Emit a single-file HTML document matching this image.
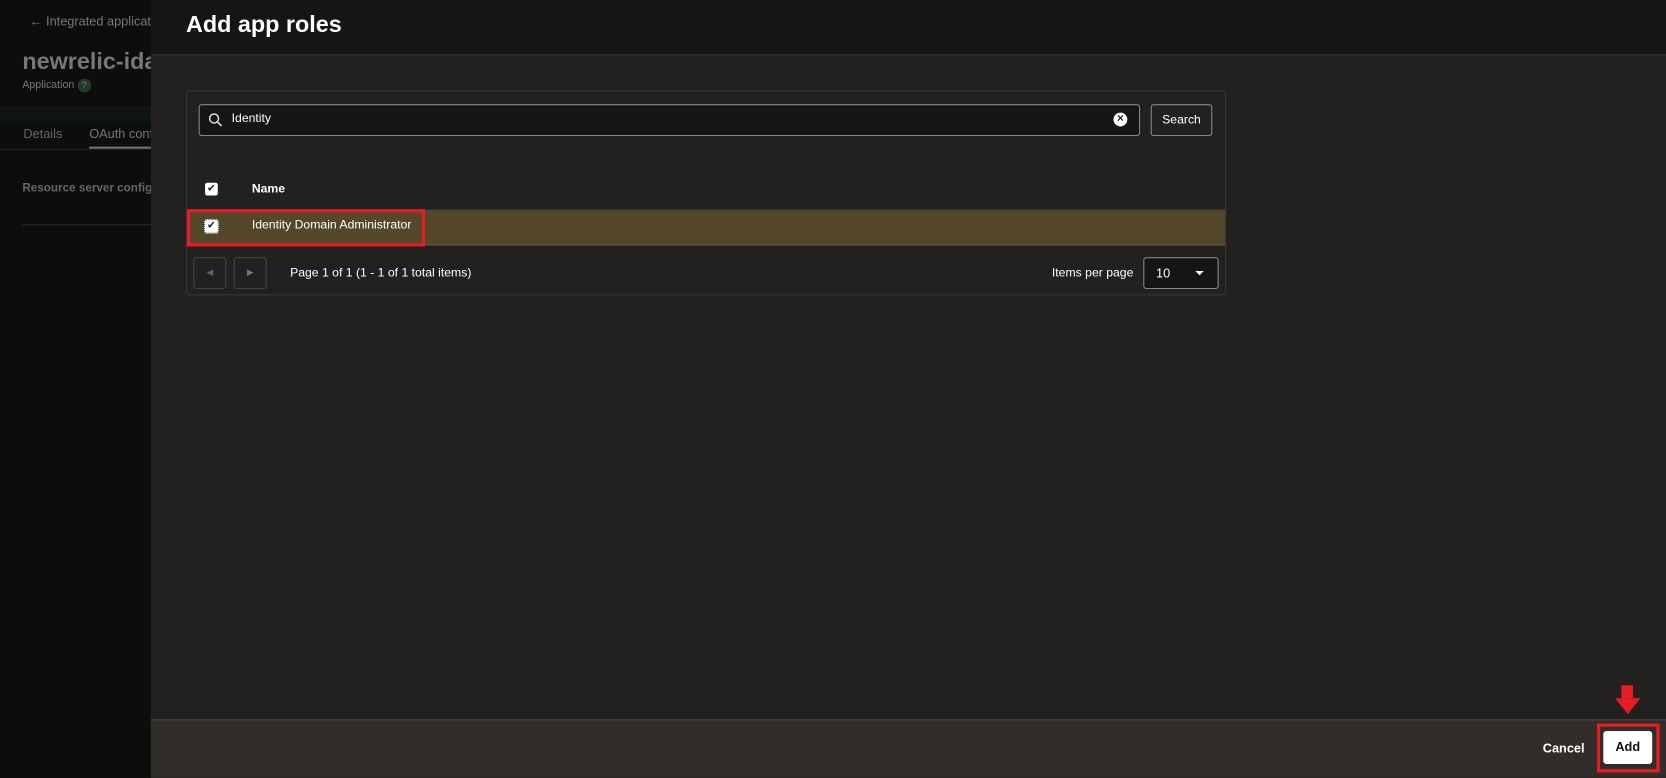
<!DOCTYPE html>
<html><head><meta charset="utf-8"><style>
*{margin:0;padding:0;box-sizing:border-box}
html,body{width:1666px;height:777px;overflow:hidden;background:#0c0c0b}
body{font-family:"Liberation Sans",sans-serif;color:#fff}
#w{position:absolute;left:0;top:0;width:1568px;height:732px;transform:scale(1.0625);transform-origin:0 0}
.abs{position:absolute}
.bg{left:0;top:0;width:142px;height:732px;background:#0d0d0c}
.panel{left:142px;top:0;width:1426px;height:732px;background:#222120}
.hdr{left:142px;top:0;width:1426px;height:52px;background:#161514;border-bottom:1px solid #333}
.card{left:175px;top:85px;width:979px;height:193px;border:1px solid #3a3836;border-radius:4px}
.cb{width:12px;height:12px;background:#fff;border-radius:2px;color:#222;font-size:10px;line-height:12px;text-align:center}
.btn{border:1px solid #6d6a66;border-radius:3px}
</style></head><body><div id="w">
<div class="abs bg"></div>
<div class="abs" style="left:28px;top:13px;font-size:12px;color:#777">← Integrated applicat</div>
<div class="abs" style="left:21px;top:45px;font-size:22px;font-weight:bold;color:#777">newrelic-ida</div>
<div class="abs" style="left:21px;top:74px;font-size:10px;color:#777">Application <span style="display:inline-block;width:13px;height:13px;border-radius:50%;background:#1f3a2a;color:#777;text-align:center;font-size:9px;line-height:13px">?</span></div>
<div class="abs" style="left:0;top:100px;width:142px;height:16px;background:#0f1511"></div>
<div class="abs" style="left:22px;top:119px;font-size:12px;color:#666">Details</div>
<div class="abs" style="left:84px;top:119px;font-size:12px;color:#777">OAuth conf</div>
<div class="abs" style="left:84px;top:138px;width:58px;height:2px;background:#777"></div>
<div class="abs" style="left:0;top:140px;width:142px;height:1px;background:#222"></div>
<div class="abs" style="left:21px;top:171px;font-size:11px;font-weight:bold;color:#666">Resource server configu</div>
<div class="abs" style="left:21px;top:211px;width:121px;height:1px;background:#2a2a2a"></div>

<div class="abs panel"></div>
<div class="abs hdr"></div>
<div class="abs" style="left:175px;top:10px;font-size:22px;font-weight:bold">Add app roles</div>

<div class="abs card"></div>
<div class="abs btn" style="left:187px;top:98px;width:886px;height:30px;background:#161514;border-color:#8a8782"></div>
<svg class="abs" style="left:196px;top:106px" width="14" height="14" viewBox="0 0 14 14"><circle cx="5.5" cy="5.5" r="4.2" fill="none" stroke="#ddd" stroke-width="1.4"/><path d="M8.6 8.6L12.5 12.5" stroke="#ddd" stroke-width="1.5"/></svg>
<div class="abs" style="left:218px;top:106px;font-size:11.5px">Identity</div>
<div class="abs" style="left:1048px;top:106px;width:13px;height:13px;border-radius:50%;background:#fff;color:#222;font-size:11px;line-height:13px;text-align:center;font-weight:bold">×</div>
<div class="abs btn" style="left:1083px;top:98px;width:58px;height:30px;font-size:11.5px;text-align:center;line-height:28px;border-color:#8a8782">Search</div>

<div class="abs cb" style="left:193px;top:172px">✔</div>
<div class="abs" style="left:237px;top:172px;font-size:11.5px;font-weight:bold">Name</div>
<div class="abs" style="left:176px;top:197px;width:977px;height:34px;background:#54472a;border-top:1px solid #3e3b37;border-bottom:1px solid #6e5f3c"></div>
<div class="abs" style="left:176px;top:197px;width:224px;height:35px;border:3px solid #e81c24"></div>
<div class="abs cb" style="left:193px;top:207px;outline:1px dotted #fff">✔</div>
<div class="abs" style="left:237px;top:206px;font-size:11.5px">Identity Domain Administrator</div>

<div class="abs btn" style="left:182px;top:242px;width:31px;height:30px;border-color:#444;color:#666;font-size:8px;text-align:center;line-height:28px">◀</div>
<div class="abs btn" style="left:220px;top:242px;width:31px;height:30px;border-color:#444;color:#777;font-size:8px;text-align:center;line-height:28px">▶</div>
<div class="abs" style="left:273px;top:251px;font-size:11.5px">Page 1 of 1 (1 - 1 of 1 total items)</div>
<div class="abs" style="left:990px;top:251px;font-size:11.5px">Items per page</div>
<div class="abs btn" style="left:1076px;top:242px;width:71px;height:30px;background:#161514;border-color:#8a8782"></div>
<div class="abs" style="left:1088px;top:250px;font-size:12px">10</div>
<div class="abs" style="left:1125px;top:255px;width:0;height:0;border-left:4px solid transparent;border-right:4px solid transparent;border-top:4px solid #fff"></div>

<div class="abs" style="left:142px;top:677px;width:1426px;height:55px;background:#312d2a;border-top:1px solid #4a4642"></div>
<div class="abs" style="left:1452px;top:697px;font-size:12px;font-weight:bold">Cancel</div>
<div class="abs" style="left:1503px;top:681px;width:59px;height:46px;border:3px solid #e81c24"></div>
<div class="abs" style="left:1509px;top:688px;width:46px;height:31px;background:#fff;border-radius:3px;color:#111;font-size:12px;font-weight:bold;text-align:center;line-height:31px">Add</div>
<div class="abs" style="left:1526px;top:645px;width:11px;height:12px;background:#e81c24"></div>
<div class="abs" style="left:1520px;top:657px;width:0;height:0;border-left:12px solid transparent;border-right:12px solid transparent;border-top:15px solid #e81c24"></div>
</div></body></html>
